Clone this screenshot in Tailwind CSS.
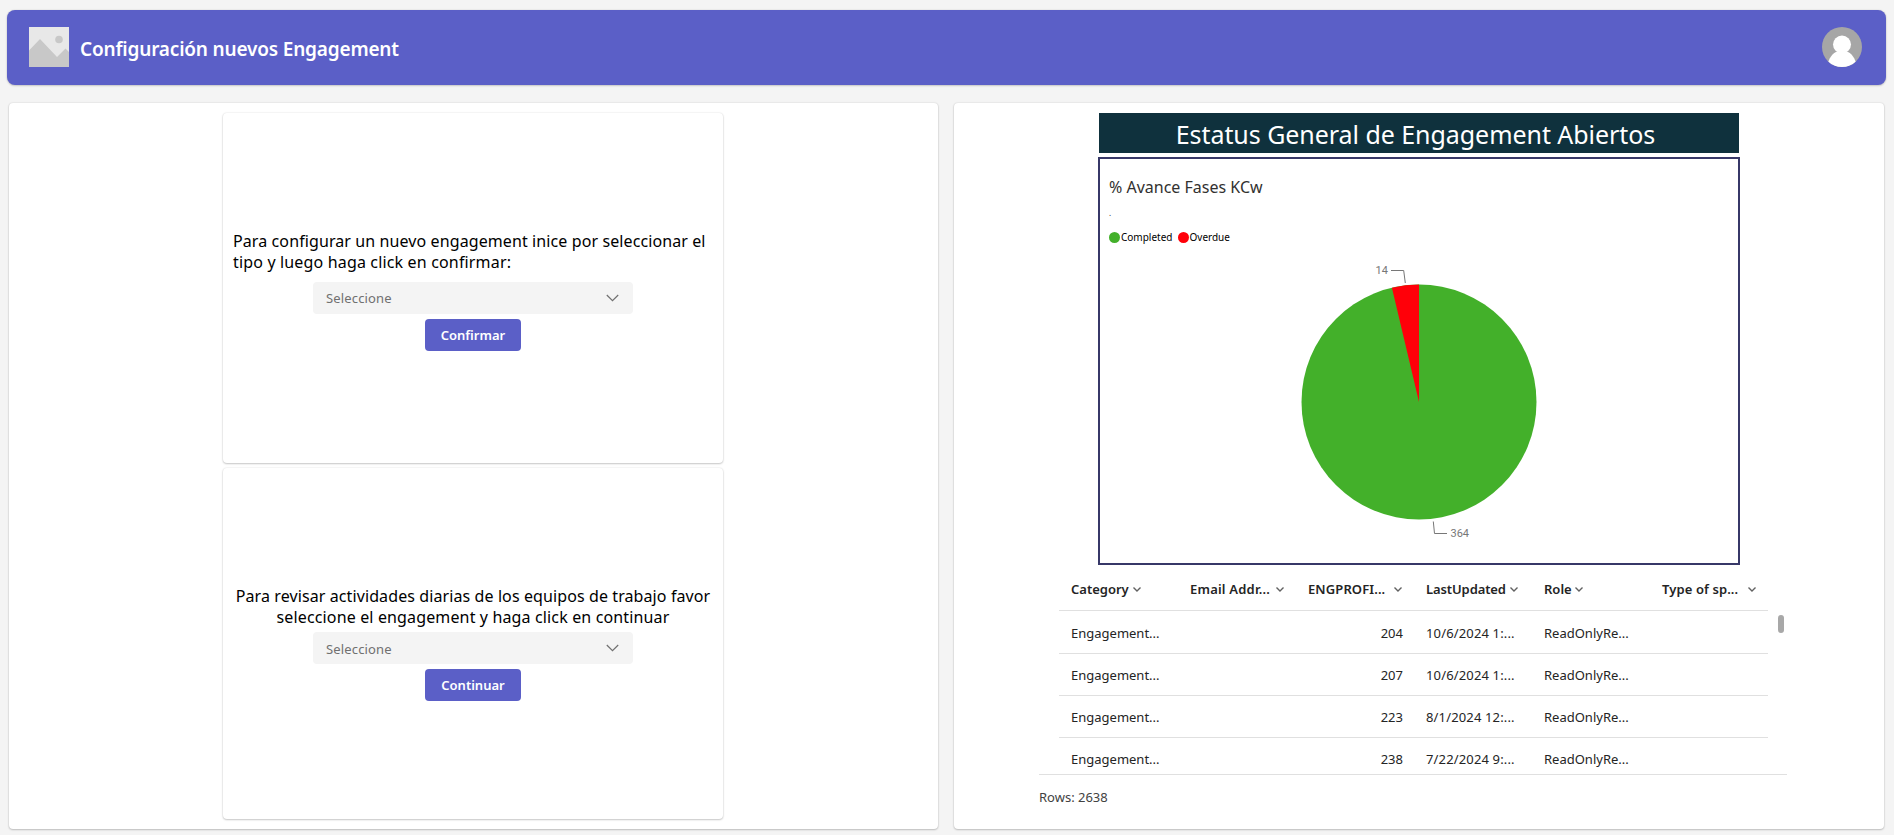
<!DOCTYPE html>
<html lang="es">
<head>
<meta charset="utf-8">
<title>Configuración nuevos Engagement</title>
<script src="https://cdn.jsdelivr.net/npm/@tailwindcss/browser@4"></script>
</head>
<body class="w-[1894px] h-[835px] overflow-hidden bg-[#f4f4f4] pt-[10px] pl-[7px] font-['Noto_Sans',sans-serif] text-[#242424]">
<svg class="hidden"><defs>
  <symbol id="chev" viewBox="0 0 8 5"><path d="M.5.5 4 4 7.500.5" fill="none" stroke="#616161" stroke-width="1.400"/></symbol>
  <symbol id="chev-lg" viewBox="0 0 13 8"><path d="M.8 1l5.700 5.700L12.200 1" fill="none" stroke="#707070" stroke-width="1.200"/></symbol>
</defs></svg>
<header class="w-[1879px] h-[75px] flex items-center rounded-lg bg-[#5b5fc7] pl-[22px] pr-6 shadow-[0_1px_2px_rgba(0,0,0,.16),0_0_2px_rgba(0,0,0,.12)]">
  <svg class="w-10 h-10 mb-[1px]" viewBox="0 0 40 40"><path fill="#e8e8e8" d="M0 0h40v40H0z"/><path fill="#c8c8c8" d="M0 23.500 11 12l17 18 8.500-8.500L40 25v15H0z"/><circle cx="30" cy="12.500" r="3.800" fill="#c8c8c8"/></svg>
  <h1 class="ml-[11px] mt-[3px] whitespace-nowrap font-semibold text-[19px] text-white tracking-[-0.18px]">Configuración nuevos Engagement</h1>
  <svg class="ml-auto w-10 h-10 mb-[1px]" viewBox="0 0 40 40"><defs><clipPath id="av"><circle cx="20" cy="20" r="20"/></clipPath></defs><g clip-path="url(#av)"><path fill="#a6a6a6" d="M0 0h40v40H0z"/><circle cx="20" cy="17.500" r="9" fill="#fff"/><path fill="#fff" d="M6 36c2-7 6-11 10-11.500h8c4 .5 8 4.500 10 11.500l-6 6H12z"/></g></svg>
</header>
<main class="flex gap-4 mt-[18px] ml-[2px]">
  <section class="w-[929px] h-[726px] rounded-[4px] bg-white flex flex-col items-center pt-[10px] pr-px shadow-[0_1px_2px_rgba(0,0,0,.2),0_0_2px_rgba(0,0,0,.14)]">
    <div class="w-[500px] h-[350px] rounded-[4px] flex flex-col items-center pt-[118px] shadow-[0_1px_2px_rgba(0,0,0,.2),0_0_2px_rgba(0,0,0,.12)]">
      <p class="w-full pl-[10px] text-[16px] leading-[21px] text-black whitespace-nowrap"><span class="tracking-[0.1px]">Para configurar un nuevo engagement inice por seleccionar el</span><br><span class="tracking-[0.16px]">tipo y luego haga click en confirmar:</span></p>
      <div class="mt-[9px] w-80 h-8 rounded-[4px] bg-[#f4f4f4] flex items-center justify-between pl-[13px] pr-[14px] text-[13px] text-[#707070] tracking-[0.15px]"><span class="pt-px">Seleccione</span><svg class="w-[13px] h-2"><use href="#chev-lg"/></svg></div>
      <button class="mt-[5px] w-24 h-8 rounded-[4px] bg-[#5b5fc7] pt-px text-white font-semibold text-[13px]">Confirmar</button>
    </div>
    <div class="mt-[5px] w-[500px] h-[351px] rounded-[4px] flex flex-col items-center pt-[118px] shadow-[0_1px_2px_rgba(0,0,0,.2),0_0_2px_rgba(0,0,0,.12)]">
      <p class="w-full text-center text-[16px] leading-[21px] text-black whitespace-nowrap"><span class="tracking-[0.1px]">Para revisar actividades diarias de los equipos de trabajo favor</span><br><span class="tracking-[0.14px]">seleccione el engagement y haga click en continuar</span></p>
      <div class="mt-[4px] w-80 h-8 rounded-[4px] bg-[#f4f4f4] flex items-center justify-between pl-[13px] pr-[14px] text-[13px] text-[#707070] tracking-[0.15px]"><span class="pt-[3px]">Seleccione</span><svg class="w-[13px] h-2"><use href="#chev-lg"/></svg></div>
      <button class="mt-[5px] w-24 h-8 rounded-[4px] bg-[#5b5fc7] pt-px text-white font-semibold text-[13px]">Continuar</button>
    </div>
  </section>

  <section class="w-[930px] h-[726px] rounded-[4px] bg-white flex flex-col items-center pt-[10px] shadow-[0_1px_2px_rgba(0,0,0,.2),0_0_2px_rgba(0,0,0,.14)]">
    <h2 class="w-[640px] h-10 shrink-0 bg-[#0f313d] pr-[7px] text-white text-center text-[25px] leading-[42px] tracking-[-0.05px]">Estatus General de Engagement Abiertos</h2>
    <div class="mt-1 w-[642px] h-[408px] shrink-0 border-2 border-[#373868] pl-[9px] pt-[16px]">
      <h3 class="text-[16px] leading-6 text-[#323130]">% Avance Fases KCw</h3>
      <p class="mt-[9px] h-[9px] text-[8px] leading-[9px] text-[#323130]">.</p>
      <div class="mt-[12px] h-4 flex items-center text-[10px] text-black">
        <span class="size-[11px] rounded-full bg-[#43b02a]"></span><span class="ml-[1px]">Completed</span>
        <span class="ml-[5px] size-[11px] rounded-full bg-[#ff0009]"></span><span class="ml-px">Overdue</span>
      </div>
      <svg class="mt-[10px] w-[618px] h-[300px]" viewBox="1109 255 618 300">
        <circle cx="1419" cy="402" r="117.500" fill="#43b02a"/>
        <path d="M1419 402V284.500A117.500 117.500 0 0 0 1391.910 287.670Z" fill="#ff0009"/>
        <g fill="none" stroke="#777" stroke-width="1"><path d="M1391 270.500h12.700l1.600 12.500"/><path d="M1433.300 521.500l1.200 12h12.500"/></g>
        <g class="font-[Roboto] text-[11px] fill-[#777]"><text x="1375.500" y="274">14</text><text x="1450.500" y="537">364</text></g>
      </svg>
    </div>
    <div class="w-[748px] h-[210px] shrink-0 mr-[12px] pl-5 overflow-hidden border-b border-[#e0e0e0] flex">
      <div class="w-[709px] text-[13px]">
        <div class="h-[46px] pt-[4px] grid grid-cols-[119px_118px_118px_118px_118px_118px] items-center border-b border-[#e0e0e0] font-semibold whitespace-nowrap">
          <div class="flex items-center pl-3"><span>Category</span><svg class="ml-1 w-2 h-[5px]"><use href="#chev"/></svg></div>
          <div class="flex items-center pl-3"><span class="w-[86px] tracking-[0.2px]">Email Addr...</span><svg class="w-2 h-[5px]"><use href="#chev"/></svg></div>
          <div class="flex items-center pl-[12px]"><span class="w-[86px] tracking-[0.1px]">ENGPROFI...</span><svg class="w-2 h-[5px]"><use href="#chev"/></svg></div>
          <div class="flex items-center pl-[12px]"><span class="w-[84px] tracking-[-0.1px]">LastUpdated</span><svg class="w-2 h-[5px]"><use href="#chev"/></svg></div>
          <div class="flex items-center pl-[12px]"><span class="w-[31px]">Role</span><svg class="w-2 h-[5px]"><use href="#chev"/></svg></div>
          <div class="flex items-center pl-[12px]"><span class="w-[86px] tracking-[0.1px]">Type of sp...</span><svg class="w-2 h-[5px]"><use href="#chev"/></svg></div>
        </div>
        <div class="h-[43px] pt-[3px] grid grid-cols-[119px_118px_118px_118px_118px_118px] items-center border-b border-[#e0e0e0]"><span class="pl-3">Engagement...</span><span></span><span class="pr-[11px] text-right">204</span><span class="pl-3 tracking-[0.15px]">10/6/2024 1:...</span><span class="pl-3">ReadOnlyRe...</span><span></span></div>
        <div class="h-[42px] pt-[3px] grid grid-cols-[119px_118px_118px_118px_118px_118px] items-center border-b border-[#e0e0e0]"><span class="pl-3">Engagement...</span><span></span><span class="pr-[11px] text-right">207</span><span class="pl-3 tracking-[0.15px]">10/6/2024 1:...</span><span class="pl-3">ReadOnlyRe...</span><span></span></div>
        <div class="h-[42px] pt-[3px] grid grid-cols-[119px_118px_118px_118px_118px_118px] items-center border-b border-[#e0e0e0]"><span class="pl-3">Engagement...</span><span></span><span class="pr-[11px] text-right">223</span><span class="pl-3 tracking-[0.15px]">8/1/2024 12:...</span><span class="pl-3">ReadOnlyRe...</span><span></span></div>
        <div class="h-[42px] pt-[3px] grid grid-cols-[119px_118px_118px_118px_118px_118px] items-center border-b border-[#e0e0e0]"><span class="pl-3">Engagement...</span><span></span><span class="pr-[11px] text-right">238</span><span class="pl-3 tracking-[0.15px]">7/22/2024 9:...</span><span class="pl-3">ReadOnlyRe...</span><span></span></div>
      </div>
      <div class="mt-[50px] ml-[10px] w-[6px] h-[18px] rounded-full bg-[#a8a8a8]"></div>
    </div>
    <p class="w-[748px] mr-[12px] mt-[12px] text-[13px] leading-5 text-[#424242]">Rows: 2638</p>
  </section>
</main>
</body>
</html>
